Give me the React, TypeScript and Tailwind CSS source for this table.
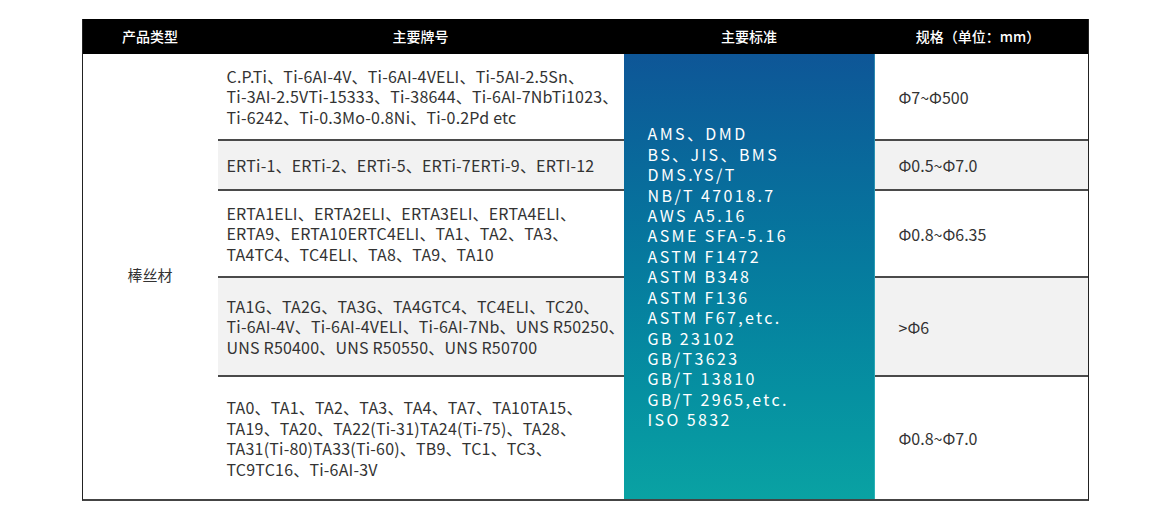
const rows = [
  {
    grades: [
      'C.P.Ti、Ti-6AI-4V、Ti-6AI-4VELI、Ti-5AI-2.5Sn、',
      'Ti-3AI-2.5VTi-15333、Ti-38644、Ti-6AI-7NbTi1023、',
      'Ti-6242、Ti-0.3Mo-0.8Ni、Ti-0.2Pd etc',
    ],
    spec: 'Φ7~Φ500',
    h: 'h-[87px]',
    grey: false,
  },
  {
    grades: ['ERTi-1、ERTi-2、ERTi-5、ERTi-7ERTi-9、ERTI-12'],
    spec: 'Φ0.5~Φ7.0',
    h: 'h-[50px]',
    grey: true,
  },
  {
    grades: [
      'ERTA1ELI、ERTA2ELI、ERTA3ELI、ERTA4ELI、',
      'ERTA9、ERTA10ERTC4ELI、TA1、TA2、TA3、',
      'TA4TC4、TC4ELI、TA8、TA9、TA10',
    ],
    spec: 'Φ0.8~Φ6.35',
    h: 'h-[87px]',
    grey: false,
  },
  {
    grades: [
      'TA1G、TA2G、TA3G、TA4GTC4、TC4ELI、TC20、',
      'Ti-6AI-4V、Ti-6AI-4VELI、Ti-6AI-7Nb、UNS R50250、',
      'UNS R50400、UNS R50550、UNS R50700',
    ],
    spec: '>Φ6',
    h: 'h-[99px]',
    grey: true,
  },
  {
    grades: [
      'TA0、TA1、TA2、TA3、TA4、TA7、TA10TA15、',
      'TA19、TA20、TA22(Ti-31)TA24(Ti-75)、TA28、',
      'TA31(Ti-80)TA33(Ti-60)、TB9、TC1、TC3、',
      'TC9TC16、Ti-6AI-3V',
    ],
    spec: 'Φ0.8~Φ7.0',
    h: 'h-[122px]',
    grey: false,
  },
];

const standards = [
  'AMS、DMD',
  'BS、JIS、BMS',
  'DMS.YS/T',
  'NB/T 47018.7',
  'AWS A5.16',
  'ASME SFA-5.16',
  'ASTM F1472',
  'ASTM B348',
  'ASTM F136',
  'ASTM F67,etc.',
  'GB 23102',
  'GB/T3623',
  'GB/T 13810',
  'GB/T 2965,etc.',
  'ISO 5832',
];

export default function App() {
  return (
    <div className="bg-white w-[1170px] h-[528px] pt-[19px] font-['Noto_Sans_CJK_SC',sans-serif]">
      <div className="mx-auto w-[1007px] border-x border-[#222] border-b-2 border-b-[#444]">
        {/* header */}
        <div className="grid grid-cols-[135px_406px_251px_213px] h-[35px] bg-black text-white text-[14px] font-medium">
          <div className="flex items-center justify-center">产品类型</div>
          <div className="flex items-center justify-center">主要牌号</div>
          <div className="flex items-center justify-center">主要标准</div>
          <div className="flex items-center justify-center pr-[6px]">规格（单位：mm）</div>
        </div>

        {/* body */}
        <div className="grid grid-cols-[135px_406px_251px_213px] text-[#333] text-[16px]">
          <div className="row-span-5 flex items-center justify-center text-[15px] pb-[2px]">棒丝材</div>

          {rows.map((r, i) => (
            <div
              key={'g' + i}
              className={`col-start-2 flex flex-col justify-center pl-[9px] leading-[20.5px] tracking-[0.2px] ${r.h} ${
                i < rows.length - 1 ? 'border-b-2 border-[#4a4a4a]' : ''
              } ${r.grey ? 'bg-[#f2f2f2]' : 'bg-white'}`}
              style={{ gridRow: i + 1 }}
            >
              {r.grades.map((g) => (
                <div key={g} className="whitespace-nowrap">{g}</div>
              ))}
            </div>
          ))}

          <div className="col-start-3 row-start-1 row-span-5 flex flex-col justify-center pl-[24px] bg-linear-to-b from-[#0e5697] to-[#0aa2a3] border-r border-[#5ccfd4]/40 text-white text-[16px] leading-[20.4px] tracking-[2.4px]">
            {standards.map((s) => (
              <div key={s} className="whitespace-nowrap">{s}</div>
            ))}
          </div>

          {rows.map((r, i) => (
            <div
              key={'s' + i}
              className={`col-start-4 flex items-center pl-[24px] ${r.h} ${
                i < rows.length - 1 ? 'border-b-2 border-[#4a4a4a]' : ''
              } ${r.grey ? 'bg-[#f2f2f2]' : 'bg-white'}`}
              style={{ gridRow: i + 1 }}
            >
              {r.spec}
            </div>
          ))}
        </div>
      </div>
    </div>
  );
}
